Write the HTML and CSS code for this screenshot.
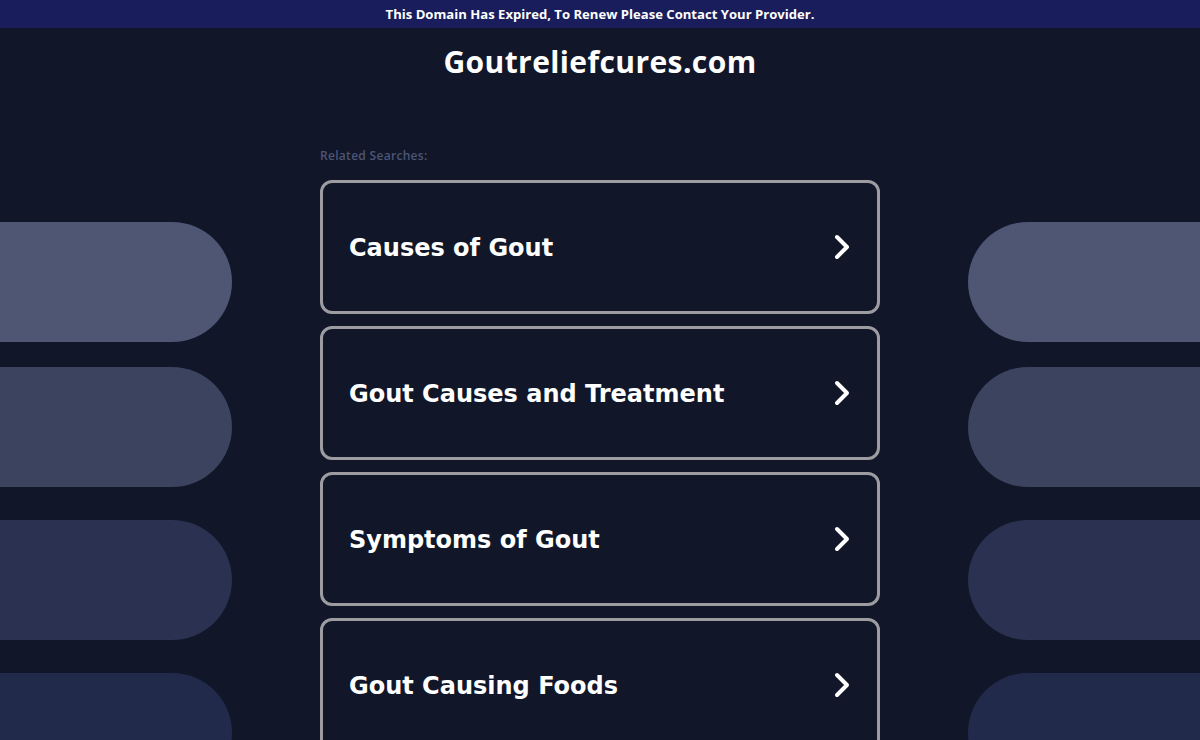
FILE: index.html
```html
<!DOCTYPE html>
<html lang="en">
<head>
<meta charset="utf-8">
<title>Goutreliefcures.com</title>
<link rel="stylesheet" href="styles.css">
</head>
<body>
<div class="notice">This Domain Has Expired, To Renew Please Contact Your Provider.</div>
<header class="header"><h1 class="title">Goutreliefcures.com</h1></header>
<main class="layout">
  <div class="pills pills-left">
    <div class="pill p1"></div>
    <div class="pill p2"></div>
    <div class="pill p3"></div>
    <div class="pill p4"></div>
  </div>
  <section class="center">
    <div class="related">Related Searches:</div>
    <a class="card" href="#"><span class="card-text">Causes of Gout</span><svg class="chev" viewBox="0 0 18 26" width="18" height="26"><polyline points="4,3 14,13 4,23" /></svg></a>
    <a class="card" href="#"><span class="card-text">Gout Causes and Treatment</span><svg class="chev" viewBox="0 0 18 26" width="18" height="26"><polyline points="4,3 14,13 4,23" /></svg></a>
    <a class="card" href="#"><span class="card-text">Symptoms of Gout</span><svg class="chev" viewBox="0 0 18 26" width="18" height="26"><polyline points="4,3 14,13 4,23" /></svg></a>
    <a class="card" href="#"><span class="card-text">Gout Causing Foods</span><svg class="chev" viewBox="0 0 18 26" width="18" height="26"><polyline points="4,3 14,13 4,23" /></svg></a>
  </section>
  <div class="pills pills-right">
    <div class="pill p1"></div>
    <div class="pill p2"></div>
    <div class="pill p3"></div>
    <div class="pill p4"></div>
  </div>
</main>
</body>
</html>
```
FILE: styles.css
```css
html, body {
  margin: 0;
  padding: 0;
  height: 100%;
  overflow: hidden;
}
body {
  background: #111729;
  color: #fff;
  font-family: "Open Sans", "Liberation Sans", sans-serif;
}
.notice {
  height: 28px;
  background: #1a1d5b;
  display: flex;
  align-items: center;
  justify-content: center;
  font-size: 13.1px;
  font-weight: 700;
  letter-spacing: 0;
}
.header {
  display: flex;
  justify-content: center;
  padding-top: 14px;
}
.title {
  margin: 0;
  font-size: 30px;
  font-weight: 700;
  line-height: 40px;
  letter-spacing: 0.4px;
}
.layout {
  display: grid;
  grid-template-columns: 232px 1fr 232px;
  margin-top: 40px;
}
.pills {
  display: flex;
  flex-direction: column;
  padding-top: 100px;
}
.pill {
  height: 120px;
  flex: none;
}
.pills-left .pill { border-radius: 0 60px 60px 0; }
.pills-right .pill { border-radius: 60px 0 0 60px; }
.p1 { background: #4e5674; }
.p2 { background: #3c435f; margin-top: 25px; }
.p3 { background: #2a3151; margin-top: 33px; }
.p4 { background: #222a4c; margin-top: 33px; }
.center {
  width: 560px;
  margin: 0 auto;
  padding-top: 26px;
  display: flex;
  flex-direction: column;
}
.related {
  font-size: 12px;
  font-weight: 600;
  color: #4d5577;
  line-height: 16px;
  letter-spacing: 0.3px;
  margin-bottom: 16px;
}
.card {
  display: flex;
  align-items: center;
  justify-content: space-between;
  height: 134px;
  box-sizing: border-box;
  border: 3px solid #9c9ca1;
  border-radius: 12px;
  margin-bottom: 12px;
  padding: 0 26px 0 26px;
  text-decoration: none;
  color: #fff;
}
.card-text {
  font-family: "DejaVu Sans", Verdana, sans-serif;
  font-weight: 700;
  font-size: 24px;
  letter-spacing: 0;
  padding-top: 2px;
}
.chev {
  display: block;
}
.chev polyline {
  fill: none;
  stroke: #fff;
  stroke-width: 4;
  stroke-linecap: round;
  stroke-linejoin: round;
}
```
